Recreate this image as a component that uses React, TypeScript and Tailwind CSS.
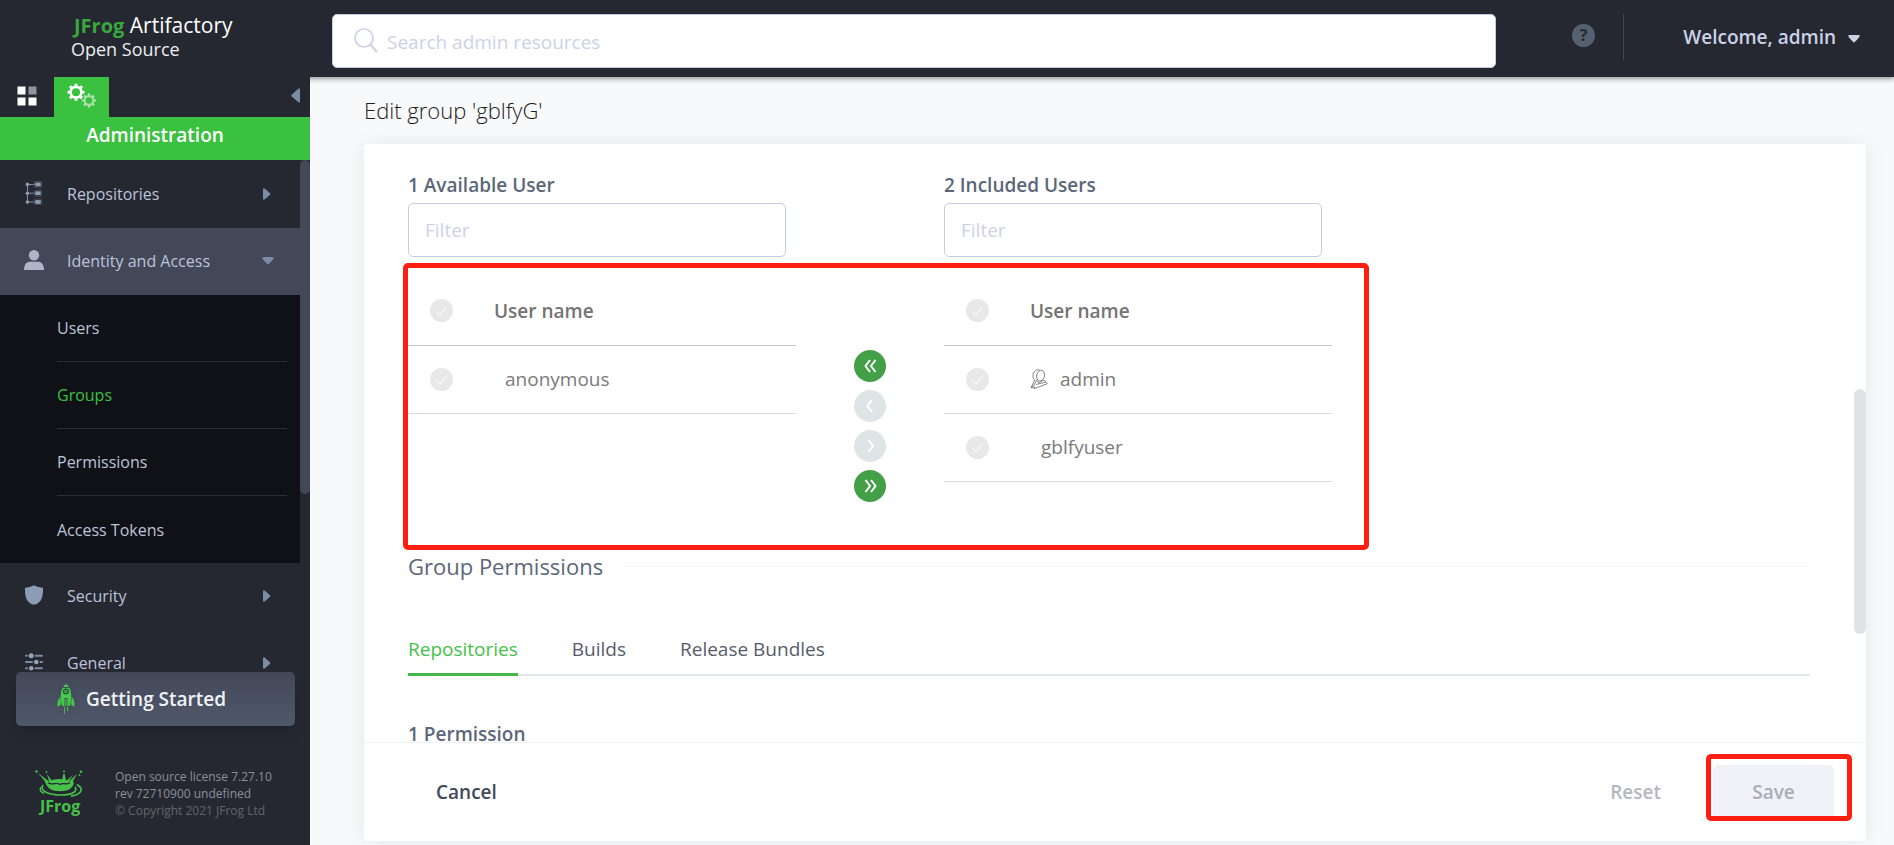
import { useState } from "react";
import type { ReactNode } from "react";

function CaretRight() {
  return (
    <svg viewBox="0 0 8 12" className="-mr-[3px] h-3 w-2 fill-[#7c8ca5]" aria-hidden="true">
      <path d="M0 1.6Q0 0 1.4.4Q2 .6 7 5.2Q7.8 6 7 6.8Q2 11.4 1.4 11.6Q0 12 0 10.4Z" />
    </svg>
  );
}

function CaretDown({ className }: { className: string }) {
  return (
    <svg viewBox="0 0 12 8" className={className} aria-hidden="true">
      <path d="M1.6 0Q0 0 .3 1.4Q.6 2 5.2 7Q6 7.8 6.8 7Q11.4 2 11.7 1.4Q12 0 10.4 0Z" />
    </svg>
  );
}

function TreeIcon() {
  return (
    <svg viewBox="0 0 18 24" className="h-6 w-[18px]" aria-hidden="true">
      <g stroke="#7c8ca5" strokeWidth="1" fill="none">
        <path d="M2.5 3.5V21M2.5 3.5H10M2.5 12.2H10M2.5 21H10" />
      </g>
      <g fill="#8b9cb5">
        <circle cx="2.4" cy="3.4" r="1.8" />
        <circle cx="2.4" cy="12.2" r="1.8" />
        <circle cx="2.4" cy="21" r="1.8" />
        <rect x="10.2" y="1.6" width="5.6" height="3.8" />
        <rect x="10.2" y="10.3" width="5.6" height="3.8" />
        <rect x="10.2" y="19.1" width="5.6" height="3.8" />
      </g>
      <g fill="none" stroke="#434c5a" strokeWidth="1">
        <rect x="9" y=".5" width="8" height="5.8" rx="1" />
        <rect x="9" y="9.3" width="8" height="5.8" rx="1" />
        <rect x="9" y="18" width="8" height="5.8" rx="1" />
      </g>
    </svg>
  );
}

function PersonIcon() {
  return (
    <svg viewBox="0 0 22 20" className="-mx-[2px] h-5 w-[22px]" aria-hidden="true">
      <circle cx="11" cy="5.3" r="5.2" fill="#adb5c6" />
      <path d="M1 20C1 14 4 11.8 7 11.8H15C18 11.8 21 14 21 20Z" fill="#adb5c6" />
    </svg>
  );
}

function ShieldIcon() {
  return (
    <svg viewBox="0 0 18 20" className="h-5 w-[18px]" aria-hidden="true">
      <path d="M9 .3C12 1.8 15 2.6 18 2.8C18.2 11 17 17 10.5 19.6H7.5C1 17 -.2 11 0 2.8C3 2.6 6 1.8 9 .3Z" fill="#8b9cb5" />
    </svg>
  );
}

function SlidersIcon() {
  return (
    <svg viewBox="0 0 18 18" className="h-[18px] w-[18px]" aria-hidden="true">
      <g stroke="#7c8ca5" strokeWidth="2" strokeLinecap="round">
        <path d="M1 2.8H2M10.5 2.8H17M1 9H7M15.5 9H17M1 15.2H2M10.5 15.2H17" />
      </g>
      <g fill="#94a3b9">
        <circle cx="6.2" cy="2.8" r="2.5" />
        <circle cx="11.3" cy="9" r="2.3" />
        <circle cx="6.2" cy="15.2" r="2.3" />
      </g>
    </svg>
  );
}

function Gear({ color }: { color: string }) {
  const angles = [0, 45, 90, 135, 180, 225, 270, 315];
  return (
    <g fill={color}>
      {angles.map((a) => (
        <path key={a} d="M-1.9 -5.5L-1.3 -8.5H1.3L1.9 -5.5Z" transform={`rotate(${a})`} />
      ))}
      <circle r="5.2" fill="none" stroke={color} strokeWidth="2.3" />
    </g>
  );
}

function GearsIcon() {
  return (
    <svg viewBox="0 0 30 26" className="h-[26px] w-[30px]" aria-hidden="true">
      <g transform="translate(9 9.2)">
        <Gear color="#ffffff" />
      </g>
      <g transform="translate(22 17.5) scale(.82)">
        <Gear color="#a9e2ab" />
      </g>
    </svg>
  );
}

function RocketIcon() {
  return (
    <svg viewBox="0 0 18 30" className="h-[30px] w-[18px] drop-shadow-md" aria-hidden="true">
      <g fill="#45c94a">
        <path d="M9 0C10 .7 11.5 2 12 3H6C6.5 2 8 .7 9 0Z" />
        <path d="M5.5 4H12.5C15 9 14.6 15 12.8 22H10.5V14H7.5V22H5.2C3.4 15 3 9 5.5 4Z" />
        <path d="M3.2 13C1 15 0 18 .6 23L4 20.5Z" />
        <path d="M14.8 13C17 15 18 18 17.4 23L14 20.5Z" />
        <path d="M8.4 15H9.6V22H8.4ZM7 23H8V30H7.3ZM9.8 23H11V27H10Z" />
      </g>
      <circle cx="9" cy="7.6" r="2.4" fill="#45c94a" stroke="#2c4a3c" strokeWidth="1.2" />
      <circle cx="9" cy="7.6" r=".8" fill="#2c4a3c" />
    </svg>
  );
}

function SplashLogo() {
  return (
    <svg viewBox="0 0 48 48" className="h-12 w-12" role="img" aria-label="JFrog">
      <g fill="#45c14a">
        <path d="M3 3L14 11.5C18 8 30 8 34 11.5L42 4L38 11C40 14 37 17 35 19C30 22 20 22 15 19C12 17 11 14 9 10Z" />
        <circle cx="1.5" cy="1.5" r="1.2" />
        <circle cx="46" cy="1.8" r="1.2" />
        <circle cx="29" cy="1.5" r="1" />
        <circle cx="11.5" cy="2" r=".9" />
        <circle cx="44.5" cy="5" r=".9" />
        <path d="M12 4L17 11L14 11ZM28.3 4H29.7L31 11H27ZM38 5L34 11H31Z" />
      </g>
      <path d="M13 12.8C18 16 21 11.500 25 14.500C28 12 31 15.500 35 12.800" stroke="#252831" strokeWidth="1.2" fill="none" />
      <g fill="none" stroke="#45c14a">
        <path d="M8 15C4 21 14 25 26 25C38 25 43 21 40 17" strokeWidth="1.6" />
        <path d="M42 14.500C51 20 44 25 36 26" strokeWidth="1.800" />
        <path d="M6 17C4 20 6 22 9 23.500" strokeWidth="1.500" />
      </g>
      <text x="5" y="42" fontFamily="Open Sans, sans-serif" fontSize="16" fontWeight="700" fill="#45c14a">
        JFrog
      </text>
    </svg>
  );
}

function AdminUserIcon() {
  return (
    <svg viewBox="0 0 18 20" className="h-5 w-[18px]" fill="none" stroke="#777" strokeWidth=".9" strokeLinejoin="round" aria-hidden="true">
      <ellipse cx="10.600" cy="6.600" rx="3.900" ry="5.400" transform="rotate(12 10.600 6.600)" />
      <path d="M9.500 .9C5 -.2 2 4.500 3.200 8.500C3.700 10 4.500 11 5.500 11.500" />
      <path d="M4.800 11L1 18.600L5 19.300L17.300 14.800L14.800 11.600L12.500 11.200" />
      <path d="M7.200 10.800L3.500 16.800L5 19.300M3.500 16.800L1 18.600M7.200 12L9 14L12.500 11.500M6 15.500L16 13" />
    </svg>
  );
}

function NavItem({ icon, label, open }: { icon: ReactNode; label: string; open?: boolean }) {
  return (
    <button
      type="button"
      aria-expanded={!!open}
      className={`flex h-[67px] w-full items-center pr-8 pb-[2px] pl-6 text-left text-base text-[#bcc3da] ${open ? "bg-[#434858]" : ""}`}
    >
      <span className="mr-[23px] flex w-5 justify-center pb-[2px]">{icon}</span>
      <span className="flex-1">{label}</span>
      {open ? <CaretDown className="-mr-[6px] h-2 w-3 fill-[#7c8ca5]" /> : <CaretRight />}
    </button>
  );
}

function Sidebar() {
  const links = ["Users", "Groups", "Permissions", "Access Tokens"];
  return (
    <aside className="flex w-[310px] shrink-0 flex-col bg-[#252831]">
      <div className="flex h-10 shrink-0 items-stretch">
        <button type="button" aria-label="Application" className="flex w-[54px] items-center justify-center pb-[2px]">
          <svg viewBox="0 0 20 20" className="h-5 w-5" aria-hidden="true">
            <path d="M.5 .5H8.5V8.5H.5ZM.5 11.5H8.5V19.5H.5ZM11.5 11.5H19.5V19.5H11.5Z" fill="#fff" />
            <path d="M11.5 .5H19.5V8.5H11.5Z" fill="#92949b" />
          </svg>
        </button>
        <button type="button" aria-label="Administration" className="flex w-[55px] items-start justify-center bg-[#3ac13f] pt-[6px]">
          <GearsIcon />
        </button>
        <button type="button" aria-label="Collapse menu" className="ml-auto flex items-center pr-[10px] pb-[3px]">
          <svg viewBox="0 0 9 15" className="h-[15px] w-[9px] fill-[#7c8ca5]" aria-hidden="true">
            <path d="M9 1.5Q9 0 7.6 .6L.6 6.7Q0 7.5 .6 8.3L7.6 14.4Q9 15 9 13.5Z" />
          </svg>
        </button>
      </div>
      <h2 className="flex h-[43px] shrink-0 items-center justify-center bg-[#3ac13f] pb-[6px] text-[19px] font-semibold text-white">
        Administration
      </h2>
      <div className="flex min-h-0 flex-1">
        <nav className="min-w-0 flex-1 overflow-hidden pt-px">
          <NavItem icon={<TreeIcon />} label="Repositories" />
          <NavItem icon={<PersonIcon />} label="Identity and Access" open />
          <ul className="bg-[#101116] pr-[13px] pl-[57px]">
            {links.map((l) => (
              <li key={l} className="h-[67px] border-b border-[#2a2d36] last:border-b-0">
                <a
                  href="#"
                  className={`flex h-full items-center text-base ${l === "Groups" ? "text-[#3ac13f]" : "text-[#bcc3da]"}`}
                >
                  {l}
                </a>
              </li>
            ))}
          </ul>
          <NavItem icon={<ShieldIcon />} label="Security" />
          <NavItem icon={<SlidersIcon />} label="General" />
        </nav>
        <div className="w-[10px]">
          <div className="h-[334px] rounded-full bg-[#434858]" />
        </div>
      </div>
      <div className="shrink-0 pr-[15px] pb-[26px] pl-4">
        <button
          type="button"
          className="flex h-[54px] w-full items-center rounded-[5px] bg-linear-to-b from-[#434858] to-[#4f586a] pl-[41px] text-[19px] font-semibold text-[#f0f2f7] shadow-lg"
        >
          <RocketIcon />
          <span className="ml-[11px]">Getting Started</span>
        </button>
        <div className="mt-[42px] flex items-center gap-8 pl-[19px]">
          <SplashLogo />
          <p className="text-[12px] leading-[17px] whitespace-nowrap text-[#8b8f9b]">
            Open source license 7.27.10
            <br />
            rev 72710900 undefined
            <br />
            <span className="text-[#63656b]">© Copyright 2021 JFrog Ltd</span>
          </p>
        </div>
      </div>
    </aside>
  );
}

function Header() {
  return (
    <header className="z-10 flex h-[77px] shrink-0 bg-[#252831] shadow-[0_2px_5px_rgba(0,0,0,0.4)]">
      <div className="w-[332px] shrink-0 pt-[11px] pl-[71px] text-white">
        <p className="pl-[3px] text-[21px] leading-7 whitespace-nowrap">
          <span className="text-xl font-bold text-[#3aa63e]">JFrog</span> Artifactory
        </p>
        <p className="text-[18px] leading-[18px] text-[#eceef2]">Open Source</p>
      </div>
      <div className="mt-[14px] flex h-[54px] min-w-0 flex-1 items-center rounded-[5px] border border-[#c5cbe3] bg-white pl-[21px]">
        <svg viewBox="0 0 24 26" className="h-[26px] w-6 shrink-0" fill="none" stroke="#ccd2e6" strokeWidth="1.7" aria-hidden="true">
          <circle cx="10" cy="10" r="9" />
          <path d="M16.3 16.5L23 24" strokeWidth="2" />
        </svg>
        <input
          type="search"
          aria-label="Search admin resources"
          placeholder="Search admin resources"
          className="ml-[9px] min-w-0 flex-1 bg-transparent pt-[3px] text-[19px] text-[#414857] outline-none placeholder:text-[#ccd2e6]"
        />
      </div>
      <div className="flex w-[398px] shrink-0 pt-[14px] pl-[76px]">
        <button type="button" aria-label="Help" className="mt-[10px] h-[23px] w-[23px] rounded-full bg-[#556070] text-base leading-[23px] font-bold text-[#252831]">
          ?
        </button>
        <div className="ml-7 h-[46px] w-px bg-[#414654]" />
        <button type="button" className="ml-auto flex h-[46px] items-center gap-3 pr-[34px] text-[19px] font-semibold text-[#ccd2e6]">
          Welcome, admin
          <CaretDown className="mt-1 h-2 w-3 fill-[#ccd2e6]" />
        </button>
      </div>
    </header>
  );
}

function RoundCheck({ label }: { label: string }) {
  return (
    <div className="relative h-[23px] w-[23px]">
      <input type="checkbox" aria-label={label} className="block h-full w-full appearance-none rounded-full bg-[#e8e8e8]" />
      <svg viewBox="0 0 23 23" className="pointer-events-none absolute inset-0" fill="none" stroke="#fff" strokeWidth="1" aria-hidden="true">
        <path d="M6 12L10 16L16.5 7.5" />
      </svg>
    </div>
  );
}

type User = { name: string; admin?: boolean };

function UserList({ title, users }: { title: string; users: User[] }) {
  return (
    <section className="w-[388px]">
      <label className="block text-[19px] leading-7 font-semibold text-[#5b6779]">
        {title}
        <input
          type="text"
          placeholder="Filter"
          className="mt-1 block h-[54px] w-[378px] rounded-[5px] border border-[#c5cbe3] px-4 text-[19px] font-normal outline-none placeholder:text-[#ccd2e6]"
        />
      </label>
      <table className="mt-5 w-full text-left text-[19px] text-[#7a7a7a]">
        <thead>
          <tr className="h-[68px] border-b border-[#c8c8c8]">
            <th className="w-[86px] pl-[22px]">
              <RoundCheck label={`Select all: ${title}`} />
            </th>
            <th className="font-semibold text-[#737373]">User name</th>
          </tr>
        </thead>
        <tbody>
          {users.map((u) => (
            <tr key={u.name} className="h-[68px] border-b border-[#dcdcdc]">
              <td className="pl-[22px]">
                <RoundCheck label={`Select ${u.name}`} />
              </td>
              <td>
                <div className="flex items-center gap-3">
                  {u.admin ? <AdminUserIcon /> : null}
                  <span className={u.admin ? "" : "pl-[11px]"}>{u.name}</span>
                </div>
              </td>
            </tr>
          ))}
        </tbody>
      </table>
    </section>
  );
}

function MoveButton({ label, path, enabled }: { label: string; path: string; enabled?: boolean }) {
  return (
    <button
      type="button"
      aria-label={label}
      disabled={!enabled}
      className={`flex h-8 w-8 items-center justify-center rounded-full ${enabled ? "bg-[#43a047]" : "bg-[#dfe4e6]"}`}
    >
      <svg viewBox="0 0 16 14" className="h-[14px] w-4" fill="none" stroke="#fff" strokeWidth="2" aria-hidden="true">
        <path d={path} />
      </svg>
    </button>
  );
}

function Tabs() {
  const names = ["Repositories", "Builds", "Release Bundles"];
  const [active, setActive] = useState(names[0]);
  return (
    <div role="tablist" className="mt-[43px] flex h-[50px] gap-[54px] border-b-2 border-[#e2e6ea]">
      {names.map((n) => (
        <button
          key={n}
          type="button"
          role="tab"
          aria-selected={n === active}
          onClick={() => setActive(n)}
          className={`-mb-[2px] border-b-[3px] pb-px text-[19px] ${
            n === active ? "border-[#45b649] text-[#45c14a]" : "border-transparent text-[#565c6b]"
          }`}
        >
          {n}
        </button>
      ))}
    </div>
  );
}

export default function App() {
  return (
    <div className="flex h-screen flex-col overflow-hidden bg-[#f8f9fb] font-['Open_Sans',sans-serif]">
      <Header />
      <div className="flex min-h-0 flex-1">
        <div className="relative z-20 flex">
          <Sidebar />
        </div>
        <main className="flex min-w-0 flex-1 flex-col pr-7 pb-1 pl-[54px]">
          <h1 className="flex h-[67px] shrink-0 items-center text-[22px] font-light text-[#1c1c1c]">Edit group 'gblfyG'</h1>
          <div className="flex min-h-0 flex-1 flex-col rounded-[3px] bg-white shadow-[0_0_20px_rgba(0,0,0,0.08)]">
            <div className="relative min-h-0 flex-1 overflow-hidden pt-[27px] pr-14 pl-11">
              <div className="relative flex h-[378px] items-start">
                <UserList title="1 Available User" users={[{ name: "anonymous" }]} />
                <div className="mt-[179px] flex w-[148px] flex-col items-center gap-2">
                  <MoveButton label="Move all left" path="M8 1L3.5 7L8 13M13.5 1L9 7L13.5 13" enabled />
                  <MoveButton label="Move left" path="M10 1L5.5 7L10 13" />
                  <MoveButton label="Move right" path="M6.5 1L11 7L6.5 13" />
                  <MoveButton label="Move all right" path="M3.5 1L8 7L3.5 13M9 1L13.5 7L9 13" enabled />
                </div>
                <UserList title="2 Included Users" users={[{ name: "admin", admin: true }, { name: "gblfyuser" }]} />
                <div className="pointer-events-none absolute top-[92px] -left-[5px] h-[287px] w-[966px] rounded-[5px] border-[5px] border-[#ff1e10]" />
              </div>
              <div className="flex items-center gap-5">
                <h2 className="text-[22px] leading-[34px] text-[#5b6779]">Group Permissions</h2>
                <div className="h-px flex-1 bg-[#f1f1f8]" />
              </div>
              <Tabs />
              <h3 className="mt-11 text-[19px] leading-7 font-semibold text-[#5b6779]">1 Permission</h3>
              <div className="absolute top-[245px] right-0 h-[245px] w-3 rounded-full bg-[#e2e2e2]" />
            </div>
            <footer className="flex h-[99px] shrink-0 items-center border-t border-[#f0f1f3] pr-8 pl-[72px] text-[19px] font-semibold">
              <button type="button" className="text-[#414857]">
                Cancel
              </button>
              <button type="button" disabled className="ml-auto text-[#b4b7bf]">
                Reset
              </button>
              <div className="relative ml-[52px]">
                <button type="button" disabled className="h-[54px] w-[121px] rounded-[5px] bg-[#f0f2f8] text-[#a9adb6]">
                  Save
                </button>
                <div className="pointer-events-none absolute -top-[11px] -left-[7px] h-[67px] w-[146px] rounded-[5px] border-[5px] border-[#ff1e10]" />
              </div>
            </footer>
          </div>
        </main>
      </div>
    </div>
  );
}
